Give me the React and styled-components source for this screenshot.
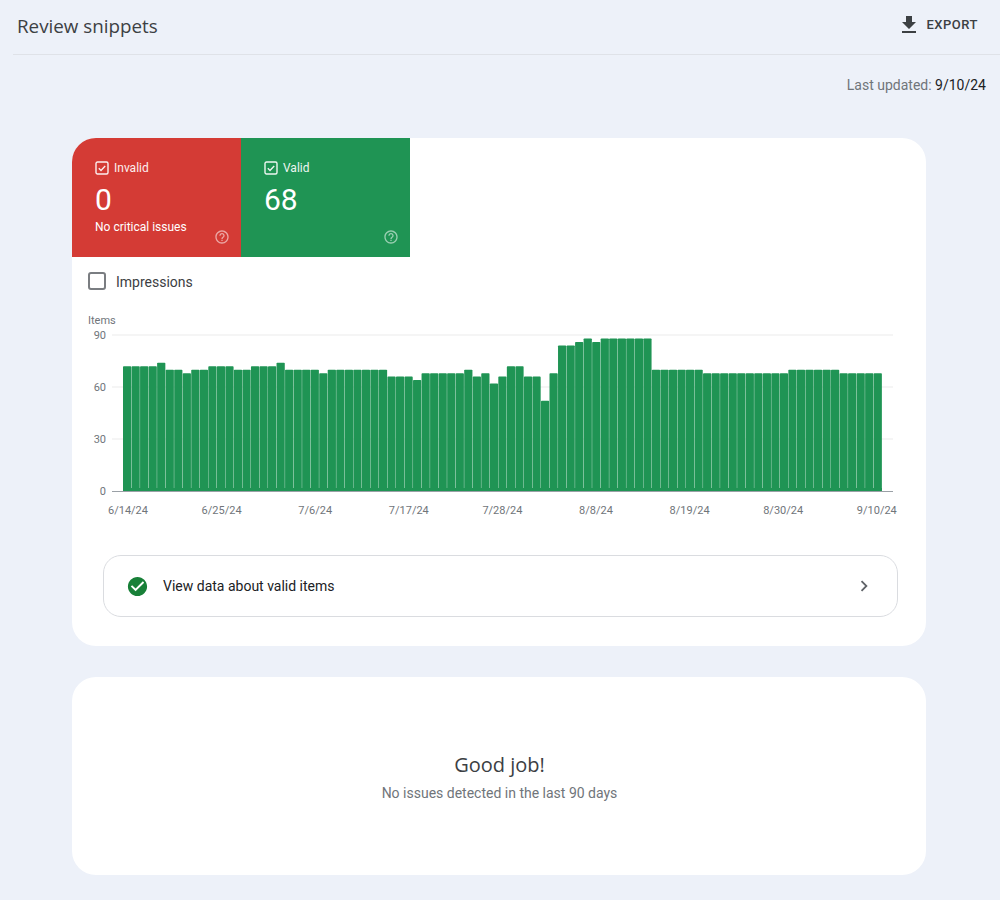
import React from 'react';
import styled, { createGlobalStyle } from 'styled-components';

const GlobalStyle = createGlobalStyle`
  html, body {
    margin: 0;
    background: #edf1f9;
    font-family: Roboto, "Liberation Sans", sans-serif;
    color: #3c4043;
  }
`;

const Page = styled.div`
  width: 1000px;
  min-height: 900px;
  padding-bottom: 25px;
  box-sizing: border-box;
`;

const Header = styled.header`
  height: 49px;
  margin-left: 13px;
  padding: 0 22px 5px 4px;
  border-bottom: 1px solid #dfe2e8;
  display: flex;
  align-items: center;
  justify-content: space-between;
`;

const Title = styled.h1`
  margin: 2px 0 0;
  font-family: "Open Sans", Roboto, sans-serif;
  font-size: 18.8px;
  font-weight: 500;
  color: #3c4043;
`;

const ExportButton = styled.button`
  display: flex;
  align-items: center;
  gap: 6px;
  padding: 0;
  border: 0;
  background: none;
  font: 500 13px Roboto, sans-serif;
  letter-spacing: 0.5px;
  color: #3c4043;
`;

const Updated = styled.div`
  padding: 20px 14px 0 0;
  height: 83px;
  box-sizing: border-box;
  text-align: right;
  font-size: 14px;
  line-height: 20px;
  color: #70757a;

  strong {
    font-weight: 400;
    color: #202124;
  }
`;

const Card = styled.section`
  width: 854px;
  margin: 0 0 31px 72px;
  background: #fff;
  border-radius: 24px;
  overflow: hidden;
`;

const Tiles = styled.div`
  display: flex;
`;

const Tile = styled.div`
  position: relative;
  width: 169px;
  height: 119px;
  box-sizing: border-box;
  padding: 21px 0 0 23px;
  background: ${props => props.bg};
  color: #fff;
`;

const TileLabel = styled.div`
  display: flex;
  align-items: center;
  gap: 5px;
  height: 18px;
  font-size: 12px;
  opacity: 0.92;
`;

const TileValue = styled.div`
  margin-top: 5px;
  font-size: 30px;
  line-height: 36px;
`;

const TileNote = styled.div`
  margin-top: 1px;
  font-size: 12px;
  line-height: 16px;
`;

const HelpIcon = styled.svg`
  position: absolute;
  right: 11.5px;
  bottom: 12px;
  width: 16px;
  height: 16px;
  fill: rgba(255, 255, 255, 0.55);
`;

const MetricRow = styled.label`
  display: flex;
  align-items: center;
  gap: 10px;
  height: 50px;
  padding-left: 16px;
  font-size: 14px;
  color: #3c4043;
`;

const MetricBox = styled.span`
  width: 14px;
  height: 14px;
  margin-bottom: 2px;
  border: 2px solid #7a7d81;
  border-radius: 3px;
`;

const ChartSvg = styled.svg`
  display: block;
  width: 854px;
  height: 215px;
  margin-top: 6px;
  font-family: Roboto, sans-serif;
  font-size: 11px;
  fill: #70757a;
`;

const IssueLink = styled.a`
  display: flex;
  align-items: center;
  gap: 14px;
  height: 62px;
  margin: 27px 28px 29px 31px;
  padding: 0 22px;
  box-sizing: border-box;
  border: 1px solid #dadce0;
  border-radius: 18px;
  font-size: 14px;
  color: #202124;
`;

const LinkText = styled.span`
  flex: 1;
`;

const EmptyCard = styled(Card)`
  height: 198px;
  margin-bottom: 0;
  text-align: center;
  padding: 74px 0 0 1px;
  box-sizing: border-box;
`;

const EmptyTitle = styled.div`
  font-family: "Open Sans", Roboto, sans-serif;
  font-size: 20px;
  line-height: 28px;
  color: #3c4043;
`;

const EmptyText = styled.div`
  margin-top: 4px;
  font-size: 14px;
  line-height: 20px;
  color: #70757a;
`;

const GREEN = '#1f9454';
const RED = '#d43b35';

const VALUES = [
  72, 72, 72, 72, 74, 70, 70, 68, 70, 70, 72, 72, 72, 70, 70, 72, 72, 72, 74, 70, 70, 70, 70, 68, 70, 70, 70, 70, 70, 70, 70,
  66, 66, 66, 64, 68, 68, 68, 68, 68, 70, 66, 68, 62, 66, 72, 72, 66, 66, 52, 68, 84, 84, 86, 88, 86,
  88, 88, 88, 88, 88, 88,
  70, 70, 70, 70, 70, 70,
  68, 68, 68, 68, 68, 68, 68, 68, 68, 68,
  70, 70, 70, 70, 70, 70,
  68, 68, 68, 68, 68,
];

const DATES = ['6/14/24', '6/25/24', '7/6/24', '7/17/24', '7/28/24', '8/8/24', '8/19/24', '8/30/24', '9/10/24'];

const CHART_LEFT = 51;
const BAR_STEP = 8.53;
const BASE_Y = 178;
const UNIT = 156 / 90;

const TileCheck = () => (
  <svg width="14" height="14" viewBox="0 0 14 14" fill="none" stroke="#fff">
    <rect x="1" y="1" width="12" height="12" rx="1.5" strokeWidth="1.4" />
    <path d="M3.8 7.2l2.2 2.2 4.2-4.4" strokeWidth="1.4" />
  </svg>
);

const Help = () => (
  <HelpIcon viewBox="0 0 24 24">
    <path d="M11 18h2v-2h-2v2zm1-16C6.48 2 2 6.48 2 12s4.48 10 10 10 10-4.48 10-10S17.52 2 12 2zm0 18c-4.41 0-8-3.59-8-8s3.59-8 8-8 8 3.59 8 8-3.59 8-8 8zm0-14c-2.21 0-4 1.79-4 4h2c0-1.1.9-2 2-2s2 .9 2 2c0 2-3 1.75-3 5h2c0-2.25 3-2.5 3-5 0-2.21-1.79-4-4-4z" />
  </HelpIcon>
);

const Chart = () => (
  <ChartSvg viewBox="0 0 854 215">
    <text x="16" y="11">Items</text>
    {[90, 60, 30].map(tick => {
      const y = BASE_Y - tick * UNIT;
      return (
        <g key={tick}>
          <line x1="40" x2="821" y1={y} y2={y} stroke="#ebebeb" />
          <text x="34" y={y + 4} textAnchor="end">{tick}</text>
        </g>
      );
    })}
    <text x="34" y={BASE_Y + 4} textAnchor="end">0</text>
    {VALUES.map((value, i) => (
      <rect
        key={i}
        x={CHART_LEFT + i * BAR_STEP}
        y={BASE_Y - value * UNIT}
        width={BAR_STEP - 0.3}
        height={value * UNIT}
        rx="0.8"
        fill={GREEN}
      />
    ))}
    <rect x={CHART_LEFT} y={BASE_Y - 3} width={BAR_STEP * 89 - 0.3} height="3" fill={GREEN} />
    <line x1="40" x2="821" y1={BASE_Y + 0.5} y2={BASE_Y + 0.5} stroke="#9aa0a6" />
    {DATES.map((date, i) => (
      <text key={date} x={56 + i * 93.6} y={BASE_Y + 23} textAnchor="middle">{date}</text>
    ))}
  </ChartSvg>
);

const App = () => (
  <Page>
    <GlobalStyle />
    <Header>
      <Title>Review snippets</Title>
      <ExportButton>
        <svg width="24" height="24" viewBox="0 0 24 24" fill="#3c4043">
          <path d="M19 9h-4V3H9v6H5l7 7 7-7zM5 18v2h14v-2H5z" />
        </svg>
        EXPORT
      </ExportButton>
    </Header>
    <Updated>Last updated: <strong>9/10/24</strong></Updated>
    <Card>
      <Tiles>
        <Tile bg={RED}>
          <TileLabel><TileCheck />Invalid</TileLabel>
          <TileValue>0</TileValue>
          <TileNote>No critical issues</TileNote>
          <Help />
        </Tile>
        <Tile bg={GREEN}>
          <TileLabel><TileCheck />Valid</TileLabel>
          <TileValue>68</TileValue>
          <Help />
        </Tile>
      </Tiles>
      <MetricRow>
        <MetricBox />
        Impressions
      </MetricRow>
      <Chart />
      <IssueLink>
        <svg width="23" height="23" viewBox="0 0 24 24" fill="#188038">
          <path d="M12 2C6.48 2 2 6.48 2 12s4.48 10 10 10 10-4.48 10-10S17.52 2 12 2zm-2 15l-5-5 1.41-1.41L10 14.17l7.59-7.59L19 8l-9 9z" />
        </svg>
        <LinkText>View data about valid items</LinkText>
        <svg width="22" height="22" viewBox="0 0 24 24" fill="#5f6368">
          <path d="M10 6L8.59 7.41 13.17 12l-4.58 4.59L10 18l6-6z" />
        </svg>
      </IssueLink>
    </Card>
    <EmptyCard>
      <EmptyTitle>Good job!</EmptyTitle>
      <EmptyText>No issues detected in the last 90 days</EmptyText>
    </EmptyCard>
  </Page>
);

export default App;
